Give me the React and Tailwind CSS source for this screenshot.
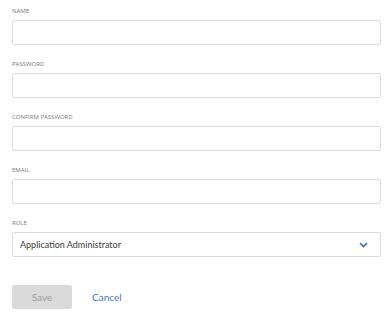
export default function App() {
  const fields = ["NAME", "PASSWORD", "CONFIRM PASSWORD", "EMAIL"];
  return (
    <div className="w-[390px] h-[316px] bg-white px-3 pt-[7px]" style={{ fontFamily: '"Open Sans", sans-serif' }}>
      {fields.map((f) => (
        <div key={f} className="mb-[15px]">
          <div className="text-[6px] leading-[8px] text-[#7a7a7a] h-[13px]">{f}</div>
          <div className="w-[369px] h-[25px] border border-[#dcdcdc] rounded-[2px]" />
        </div>
      ))}
      <div>
        <div className="text-[6px] leading-[8px] text-[#7a7a7a] h-[13px]">ROLE</div>
        <div className="w-[369px] h-[25px] border border-[#dcdcdc] rounded-[2px] flex items-center justify-between pl-[7px] pr-[12px]">
          <span className="text-[9px] text-[#3a3a3a] font-['Lato',sans-serif]">Application Administrator</span>
          <svg width="9" height="6" viewBox="0 0 9 6">
            <path d="M1 1l3.5 3.5L8 1" fill="none" stroke="#3d6eb5" strokeWidth="1.6" />
          </svg>
        </div>
      </div>
      <div className="flex items-center mt-[28px] font-['Lato',sans-serif]">
        <div className="w-[60px] h-[24px] bg-[#dadada] rounded-[2px] flex items-center justify-center text-[10px] text-[#9e9e9e]">Save</div>
        <div className="ml-[20px] text-[10px] text-[#4a78c0]">Cancel</div>
      </div>
    </div>
  );
}
